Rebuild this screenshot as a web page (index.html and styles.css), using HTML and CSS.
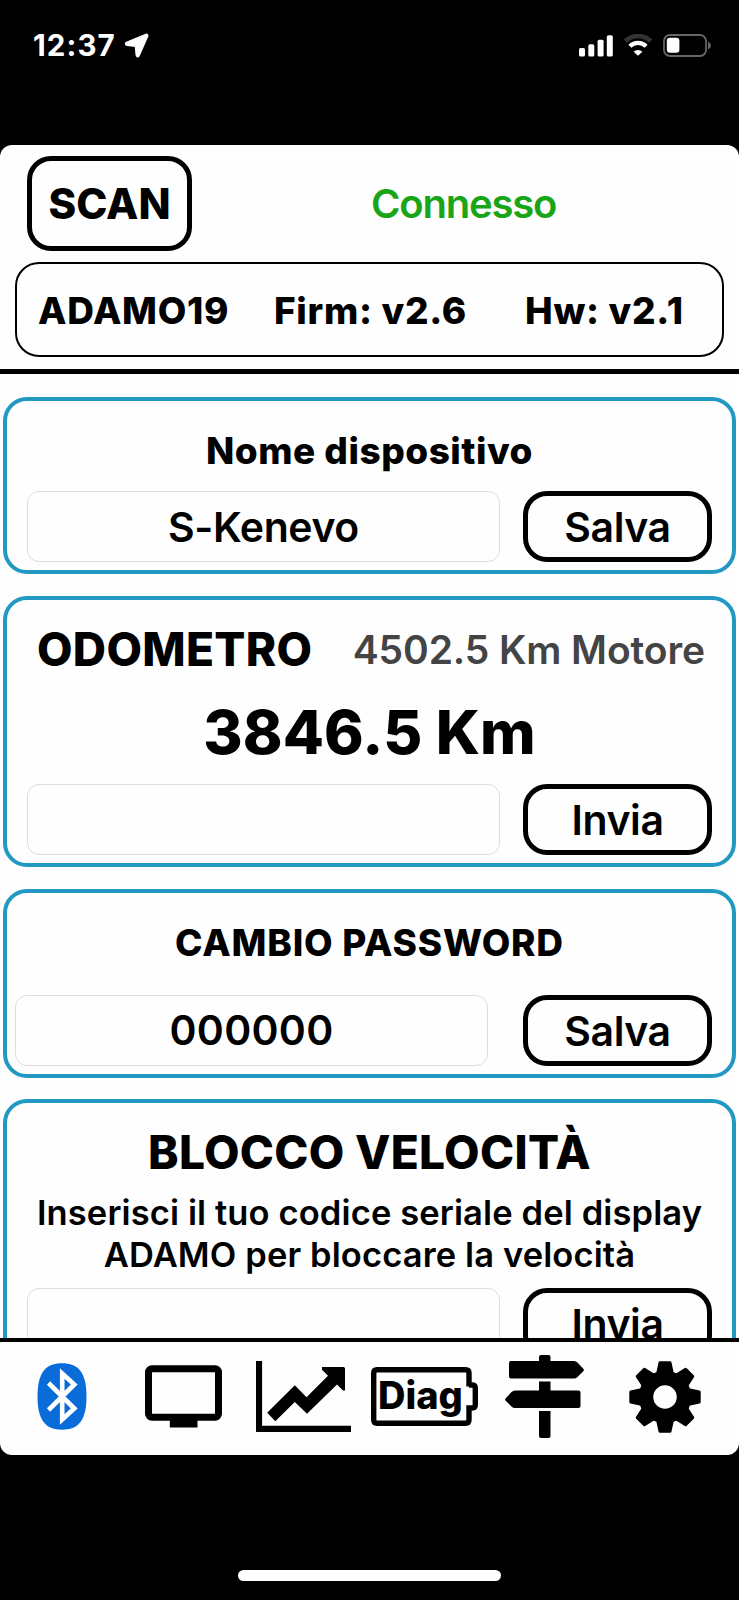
FILE: index.html
```
<!DOCTYPE html>
<html lang="it">
<head>
  <meta charset="UTF-8" />
  <meta name="viewport" content="width=device-width, initial-scale=1.0"/>
  <title>Adamo</title>
  <link rel="stylesheet" href="styles.css">
</head>
<body>
  <div class="status-bar">
    <span class="ora">12:37</span>
    <svg class="posizione" viewBox="0 0 25 25"><path d="M22 1.5 L2.5 9.5 Q0.5 11 2.8 12.2 L11.5 13.2 L12.3 22 Q13.3 25 15 22.8 L23.6 3.2 Q24 1 22 1.5Z" fill="#fff" stroke="#fff" stroke-width="1.6" stroke-linejoin="round"/></svg>
    <svg class="segnale" viewBox="0 0 34 22">
      <g fill="#fff"><rect x="0" y="13" width="6" height="8.5" rx="1.6"/><rect x="9.3" y="9.3" width="6" height="12.2" rx="1.6"/><rect x="18.6" y="4.7" width="6" height="16.8" rx="1.6"/><rect x="27.8" y="0.3" width="6" height="21.2" rx="1.6"/></g>
    </svg>
    <svg class="wifi" viewBox="0 0 30 22">
      <path d="M2.2 7.2 A18.5 18.5 0 0 1 27.8 7.2" fill="none" stroke="#333" stroke-width="4.6"/>
      <path d="M6.9 12.2 A11.6 11.6 0 0 1 23.1 12.2" fill="none" stroke="#fff" stroke-width="4.2"/>
      <path d="M15 21.7 L10.6 17.8 A6.4 6.4 0 0 1 19.4 17.8Z" fill="#fff"/>
    </svg>
    <svg class="batteria" viewBox="0 0 49 23">
      <rect x="1" y="1" width="42" height="21" rx="6" fill="none" stroke="#666" stroke-width="1.8"/>
      <rect x="3.8" y="3.8" width="12.6" height="15" rx="3" fill="#fff"/>
      <path d="M45 7.5 Q48 9 48 11.5 Q48 14 45 15.5Z" fill="#666"/>
    </svg>
  </div>

  <div class="app">
    <header>
      <div class="connessione">
        <button class="btn-scan">SCAN</button>
        <span class="stato">Connesso</span>
      </div>
      <div class="info">
        <span class="modello">ADAMO19</span>
        <span class="firmware">Firm: v2.6</span>
        <span class="hardware">Hw: v2.1</span>
      </div>
    </header>

    <main>
      <section class="card nome">
        <h3>Nome dispositivo</h3>
        <div class="riga">
          <input type="text" value="S-Kenevo">
          <button>Salva</button>
        </div>
      </section>

      <section class="card odometro">
        <div class="testata">
          <h2>ODOMETRO</h2>
          <span class="motore">4502.5 Km Motore</span>
        </div>
        <p class="totale">3846.5 Km</p>
        <div class="riga">
          <input type="text">
          <button>Invia</button>
        </div>
      </section>

      <section class="card password">
        <h3>CAMBIO PASSWORD</h3>
        <div class="riga">
          <input type="text" value="000000">
          <button>Salva</button>
        </div>
      </section>

      <section class="card blocco">
        <h2>BLOCCO VELOCITÀ</h2>
        <p class="testo">Inserisci il tuo codice seriale del display<br>ADAMO per bloccare la velocità</p>
        <div class="riga">
          <input type="text">
          <button>Invia</button>
        </div>
      </section>
    </main>

    <nav>
      <a><svg width="50" height="67" viewBox="0 0 50 67">
        <path d="M25 .3 C41 .3 49.5 9 49.5 33.5 C49.5 58 41 66.7 25 66.7 C9 66.7 .5 58 .5 33.5 C.5 9 9 .3 25 .3Z" fill="#0a6cd8"/>
        <path d="M11.5 20 L37.3 45.5 L25.2 56.5 V10.5 L37.3 21.5 L11.5 47" fill="none" stroke="#fff" stroke-width="4.6"/>
      </svg></a>
      <a class="monitor"><svg width="77" height="63" viewBox="0 0 77 63">
        <rect x="3.5" y="3.7" width="70" height="48.6" rx="3.5" fill="none" stroke="#000" stroke-width="7"/>
        <rect x="24.8" y="52" width="27.7" height="10.5"/>
      </svg></a>
      <a><svg width="95" height="71" viewBox="0 0 95 71">
        <path d="M3 0 V67.8 H95" fill="none" stroke="#000" stroke-width="6.2"/>
        <path d="M11.2 51.7 L38.8 24.3 L50.5 36.2 L72 14.7 L66 8.7 V6 H87.5 Q89 6 89 7.5 V29.5 H87 L81 23.5 L51 52.7 L38.8 41 L19.3 60.3Z"/>
      </svg></a>
      <a class="diag"><svg width="107" height="59" viewBox="0 0 107 59">
        <path d="M98 19.5 V6 Q98 2.7 94.5 2.7 H6 Q2.7 2.7 2.7 6 V52.8 Q2.7 56.3 6 56.3 H94.5 Q98 56.3 98 52.8 V41 H101 Q104.3 41 104.3 38 V21 Q104.3 18 101 18 H98" fill="none" stroke="#000" stroke-width="5.4"/>
      </svg><span>Diag</span></a>
      <a><svg width="79" height="83" viewBox="0 0 79 83">
        <path d="M34 6 V2 Q34 0 36 0 H43.5 Q45.5 0 45.5 2 V6 H69 Q71 6 72.5 7.5 L78.5 14 Q79.3 15 78.5 16 L72.5 22 Q71 23.5 69 23.5 H6 Q4 23.5 4 21.5 V8 Q4 6 6 6Z"/>
        <path d="M34 26.5 H45.5 V35.5 H73.5 Q75.5 35.5 75.5 37.5 V51 Q75.5 53 73.5 53 H10 Q8 53 6.5 51.5 L.5 45.5 Q-.2 44.5 .5 43.5 L6.5 37 Q8 35.5 10 35.5 H34Z"/>
        <path d="M34 56 H45.5 V81 Q45.5 83 43.5 83 H36 Q34 83 34 81Z"/>
      </svg></a>
      <a class="impostazioni"><svg width="72" height="72" viewBox="-36 -36 72 72">
        <circle r="19" fill="none" stroke="#000" stroke-width="14.5"/>
        <path id="dente" d="M-9 -23 L-6.5 -34.5 Q-6.3 -35.7 -5 -35.7 H5 Q6.3 -35.7 6.5 -34.5 L9 -23Z"/>
        <use href="#dente" transform="rotate(45)"/><use href="#dente" transform="rotate(90)"/><use href="#dente" transform="rotate(135)"/>
        <use href="#dente" transform="rotate(180)"/><use href="#dente" transform="rotate(225)"/><use href="#dente" transform="rotate(270)"/><use href="#dente" transform="rotate(315)"/>
      </svg></a>
    </nav>
  </div>

  <div class="home-bar"></div>
</body>
</html>
```

FILE: styles.css
```
* { box-sizing: border-box; }

body {
  margin: 0;
  height: 1600px;
  font-family: 'Inter', sans-serif;
  background: #000;
  color: #000;
  display: flex;
  flex-direction: column;
  align-items: center;
  overflow: hidden;
}

h2, h3, p { margin: 0; }

/* barra di stato */
.status-bar {
  width: 100%;
  height: 144.5px;
  padding: 33px 27px 0 33px;
  display: flex;
  align-items: flex-start;
  color: #fff;
}

.ora {
  width: 91px;
  font-size: 29.5px;
  font-weight: 700;
  letter-spacing: 1.1px;
  line-height: 25px;
}

.posizione { width: 25px; height: 25px; margin-right: auto; }
.segnale { width: 34px; height: 22px; margin: 2px 10px 0 0; }
.wifi { width: 30px; height: 22px; margin: 1px 10px 0 0; }
.batteria { width: 49px; height: 23px; margin-top: 1px; }

.app {
  width: 100%;
  height: 1310.5px;
  background: #fefefe;
  border-radius: 12px;
  overflow: hidden;
  display: flex;
  flex-direction: column;
}

header {
  height: 229.5px;
  flex: none;
  padding: 11.5px 15px 0;
  border-bottom: 5px solid #000;
}

.connessione {
  display: flex;
  align-items: center;
  height: 95px;
  padding-left: 12px;
  margin-bottom: 11px;
}

button {
  width: 189px;
  height: 71px;
  padding: 1px 0 0;
  border: 5px solid #000;
  border-radius: 24px;
  background: #fefefe;
  color: #000;
  font-family: inherit;
  font-size: 41px;
  font-weight: 600;
  letter-spacing: -0.4px;
}

.btn-scan {
  width: 165px;
  height: 95px;
  padding: 0;
  font-size: 42px;
  font-weight: 800;
  letter-spacing: 0;
}

.stato {
  margin-left: 179px;
  color: #18a518;
  font-size: 40px;
  font-weight: 600;
  letter-spacing: -1.2px;
}

.info {
  height: 95px;
  border: 2px solid #000;
  border-radius: 24px;
  padding: 1px 0 0 21px;
  display: grid;
  grid-template-columns: 236px 251px auto;
  align-items: center;
  font-size: 37px;
  font-weight: 800;
  letter-spacing: 0.7px;
}

main {
  flex: 1;
  min-height: 0;
  padding: 23px 3px 0;
  overflow: hidden;
}

.card {
  border: 4px solid #2199c3;
  border-radius: 24px;
  padding: 0 20px 8px;
  margin-bottom: 21.5px;
  text-align: center;
}

h2 { font-size: 46px; font-weight: 800; letter-spacing: 0.3px; }
h3 { font-size: 37px; font-weight: 800; letter-spacing: 0.5px; }

.riga {
  display: flex;
  justify-content: space-between;
}

input {
  width: 473px;
  height: 71px;
  padding: 0;
  border: 1px solid #ddd;
  border-radius: 12px;
  background: #fefefe;
  color: #000;
  font-family: inherit;
  font-size: 41px;
  font-weight: 600;
  letter-spacing: -0.4px;
  text-align: center;
}

.nome h3 { padding-top: 10px; line-height: 80px; }

.odometro { margin-bottom: 22px; }

.testata {
  display: flex;
  justify-content: space-between;
  align-items: center;
  height: 80px;
  padding: 19px 7px 0 10px;
}

.motore {
  color: #444;
  font-size: 39px;
  font-weight: 600;
  letter-spacing: -0.1px;
}

.totale {
  font-size: 60px;
  font-weight: 800;
  letter-spacing: 0.1px;
  line-height: 104px;
}

.password { padding-left: 8px; }
.password h3 { line-height: 99px; margin: 0 0 3px 12px; letter-spacing: 0.8px; }
.password input { letter-spacing: 0.3px; }

.blocco h2 { padding-top: 24px; line-height: 50px; }

.testo {
  margin: 15px -20px 11px;
  font-size: 34.5px;
  font-weight: 600;
  letter-spacing: 0.12px;
  line-height: 42.4px;
  white-space: nowrap;
}

nav {
  height: 117.5px;
  flex: none;
  border-top: 4px solid #000;
  padding: 0 13px 3.5px 2px;
  display: grid;
  grid-template-columns: repeat(6, 1fr);
}

nav a {
  display: flex;
  align-items: center;
  justify-content: center;
}

.monitor { padding-left: 2px; }
.impostazioni { padding-right: 2px; }

/* etichetta dentro la batteria */
.diag { position: relative; }

.diag span {
  position: absolute;
  left: 14px;
  top: 30px;
  font-size: 38px;
  font-weight: 800;
}

.home-bar {
  width: 263px;
  height: 11px;
  margin-top: 115px;
  border-radius: 6px;
  background: #fff;
}
```
